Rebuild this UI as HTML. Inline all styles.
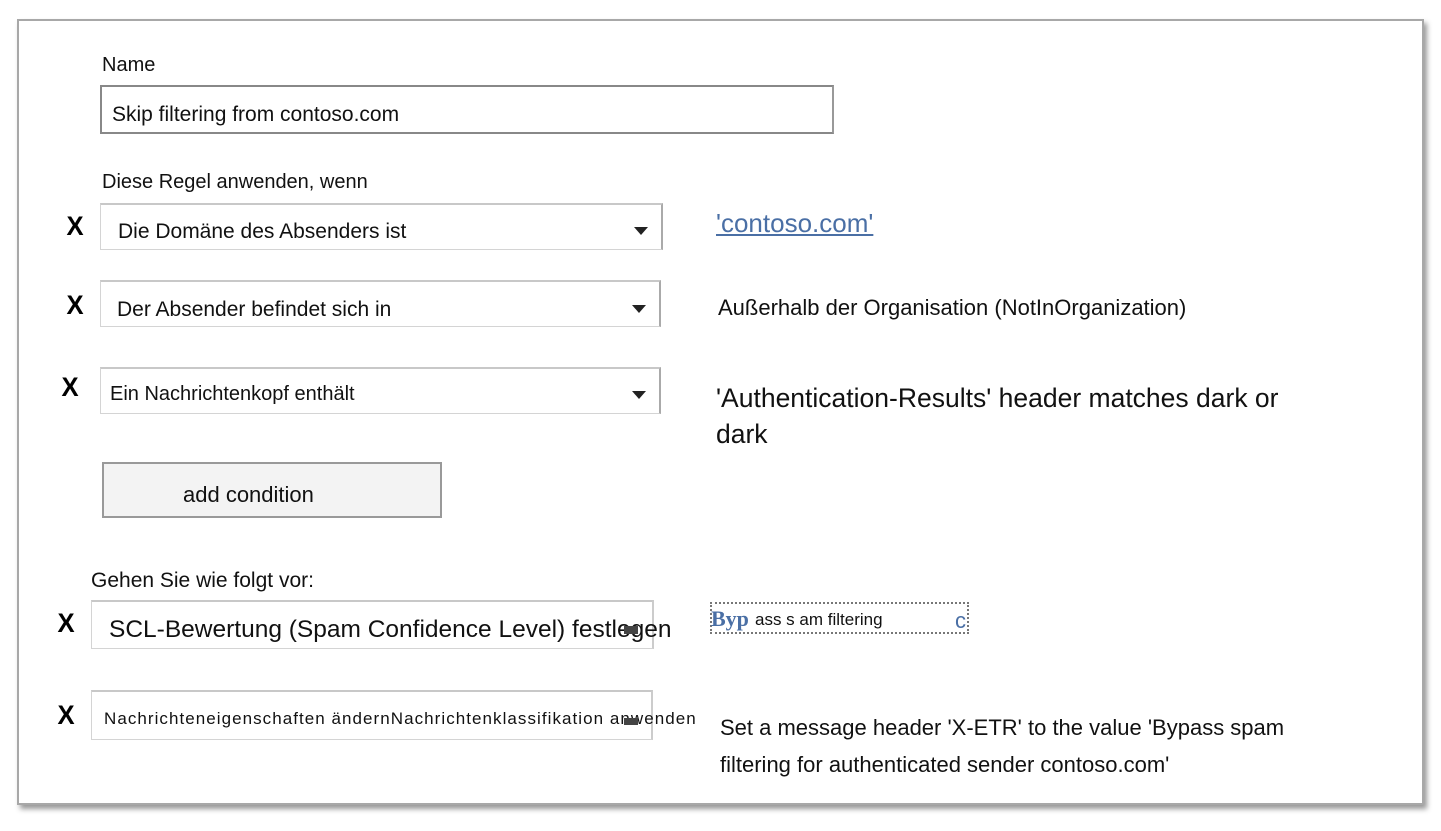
<!DOCTYPE html>
<html><head><meta charset="utf-8"><style>
body{margin:0;width:1441px;height:831px;background:#fff;position:relative;overflow:hidden;font-family:"Liberation Sans",Arial,sans-serif;color:#111}
.frame{position:absolute;left:17px;top:19px;width:1403px;height:782px;border:2px solid #a8a8a8;box-shadow:3px 4px 5px #999;background:#fff}
.a{position:absolute;white-space:nowrap}
.box{position:absolute;border:1px solid #d4d4d4;border-top:2px solid #c8c8c8;background:#fff;box-sizing:border-box}
.arr{position:absolute;width:0;height:0;border-left:7px solid transparent;border-right:7px solid transparent;border-top:8px solid #222}
.x{position:absolute;font-weight:bold;font-size:27px;transform:scaleX(.95);color:#000}
</style></head><body>
<div class="frame"></div>
<div class="a" style="left:102px;top:54px;font-size:20px">Name</div>
<div class="box" style="left:100px;top:85px;width:734px;height:49px;border:2px solid #888;border-right-color:#999"></div>
<div class="a" style="left:112px;top:103px;font-size:21px">Skip filtering from contoso.com</div>
<div class="a" style="left:102px;top:171px;font-size:20px">Diese Regel anwenden, wenn</div>

<div class="x" style="left:66px;top:211px">X</div>
<div class="box" style="left:100px;top:203px;width:563px;height:47px;border-right:2px solid #aaa"></div>
<div class="a" style="left:118px;top:220px;font-size:21px">Die Domäne des Absenders ist</div>
<div class="arr" style="left:634px;top:227px"></div>
<div class="a" style="left:716px;top:208px;font-size:26px;color:#4a6fa5;text-decoration:underline">'contoso.com'</div>

<div class="x" style="left:66px;top:290px">X</div>
<div class="box" style="left:100px;top:280px;width:561px;height:47px;border-right:2px solid #aaa"></div>
<div class="a" style="left:117px;top:298px;font-size:21px">Der Absender befindet sich in</div>
<div class="arr" style="left:632px;top:305px"></div>
<div class="a" style="left:718px;top:295px;font-size:22px">Außerhalb der Organisation (NotInOrganization)</div>

<div class="x" style="left:61px;top:372px">X</div>
<div class="box" style="left:100px;top:367px;width:561px;height:47px;border-right:2px solid #aaa"></div>
<div class="a" style="left:110px;top:383px;font-size:20px">Ein Nachrichtenkopf enthält</div>
<div class="arr" style="left:632px;top:391px"></div>
<div class="a" style="left:716px;top:380px;font-size:26.5px;line-height:36px">'Authentication-Results' header matches dark or<br>dark</div>

<div class="box" style="left:102px;top:462px;width:340px;height:56px;border:2px solid #999;background:#f3f3f3"></div>
<div class="a" style="left:183px;top:482px;font-size:22px">add condition</div>

<div class="a" style="left:91px;top:569px;font-size:21px">Gehen Sie wie folgt vor:</div>
<div class="x" style="left:57px;top:608px">X</div>
<div class="box" style="left:91px;top:600px;width:563px;height:49px;border-right:2px solid #ccc"></div>
<div class="a" style="left:109px;top:616px;font-size:24.5px">SCL-Bewertung (Spam Confidence Level) festlegen</div>
<div class="a" style="left:624px;top:626px;width:14px;height:8px;background:#444"></div>
<div class="box" style="left:710px;top:602px;width:259px;height:32px;border:2px dotted #777;background:none"></div>
<div class="a" style="left:711px;top:606px;font-size:22px;color:#4a6fa5;font-family:'Liberation Serif',serif;font-weight:bold">Byp</div>
<div class="a" style="left:755px;top:610px;font-size:17px">ass s am filtering</div>
<div class="a" style="left:955px;top:608px;font-size:22px;color:#4a6fa5">c</div>

<div class="x" style="left:57px;top:700px">X</div>
<div class="box" style="left:91px;top:690px;width:562px;height:50px;border-right:2px solid #ccc"></div>
<div class="a" style="left:104px;top:709px;font-size:17px;letter-spacing:1.05px">Nachrichteneigenschaften ändernNachrichtenklassifikation anwenden</div>
<div class="a" style="left:624px;top:718px;width:14px;height:7px;background:#444"></div>
<div class="a" style="left:720px;top:709px;font-size:22px;line-height:37px">Set a message header 'X-ETR' to the value 'Bypass spam<br>filtering for authenticated sender contoso.com'</div>
</body></html>
